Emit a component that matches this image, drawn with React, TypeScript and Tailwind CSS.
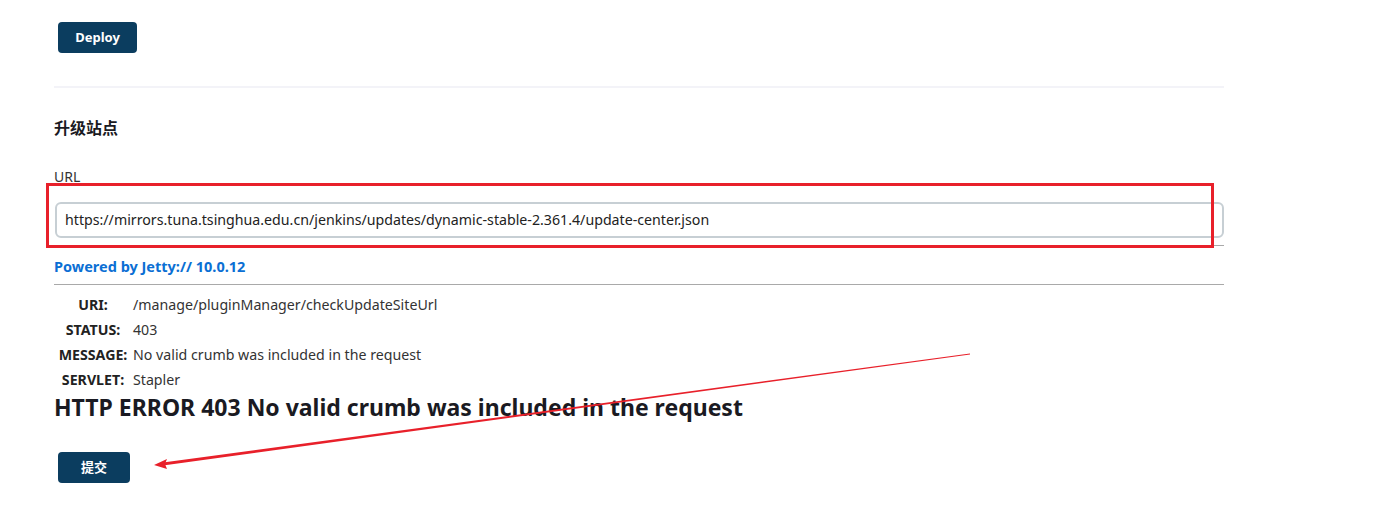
export default function App() {
  const rows = [
    { label: 'URI:', value: '/manage/pluginManager/checkUpdateSiteUrl' },
    { label: 'STATUS:', value: '403' },
    { label: 'MESSAGE:', value: 'No valid crumb was included in the request' },
    { label: 'SERVLET:', value: 'Stapler' },
  ];

  return (
    <div
      className="relative w-[1386px] h-[517px] bg-white overflow-hidden text-[#333]"
      style={{ fontFamily: '"Noto Sans", "Noto Sans CJK SC", sans-serif' }}
    >
      <div className="ml-[54px] w-[1170px] pt-[22px]">
        {/* Deploy */}
        <button className="ml-[4px] h-[31px] w-[79px] rounded-[4px] bg-[#0b3d5f] text-white text-[13px] font-bold">
          Deploy
        </button>

        <div className="mt-[33px] h-[2px] bg-[#f3f3f8]" />

        {/* Update site */}
        <h3 className="mt-[30px] text-[16px] font-bold text-[#1a1a22] leading-[20px]">升级站点</h3>

        <div className="mt-[29px] text-[14px] leading-[20px] text-[#333]">URL</div>

        <div className="mt-[15px] ml-[1px] h-[36px] rounded-[6px] border-2 border-[#c7cfd4] flex items-center px-[8px] text-[14.2px] text-[#222]">
          https://mirrors.tuna.tsinghua.edu.cn/jenkins/updates/dynamic-stable-2.361.4/update-center.json
        </div>

        {/* Jetty error page */}
        <div className="mt-[7px] h-px bg-[#a9a9a9]" />
        <div className="mt-[10px] text-[14.5px] font-bold text-[#0b6fd4] leading-[20px]">Powered by Jetty:// 10.0.12</div>
        <div className="mt-[8px] h-px bg-[#a9a9a9]" />

        <table className="mt-[8px] text-[14.2px] leading-[20px]">
          <tbody>
            {rows.map((r) => (
              <tr key={r.label}>
                <th className="w-[78px] text-center font-bold text-[#222] py-[2.4px]">{r.label}</th>
                <td className="pl-[1px] text-[#333] py-[2.4px]">{r.value}</td>
              </tr>
            ))}
          </tbody>
        </table>

        <h2 className="mt-[1px] text-[23px] font-bold text-[#1a1a22] leading-[28px]">
          HTTP ERROR 403 No valid crumb was included in the request
        </h2>

        <button className="mt-[31px] ml-[4px] h-[31px] w-[72px] rounded-[4px] bg-[#0b3d5f] text-white text-[13px] font-bold">
          提交
        </button>
      </div>

      {/* annotations */}
      <svg className="absolute inset-0 pointer-events-none" width="1386" height="517">
        <rect x="47.5" y="184.5" width="1165" height="62" fill="none" stroke="#e8202a" strokeWidth="3" />
        <polygon points="970,353.5 970,354.5 163,465.5 163,462.5" fill="#e8202a" />
        <polygon points="154,465 167,459 165,464 167,469" fill="#e8202a" />
      </svg>
    </div>
  );
}
